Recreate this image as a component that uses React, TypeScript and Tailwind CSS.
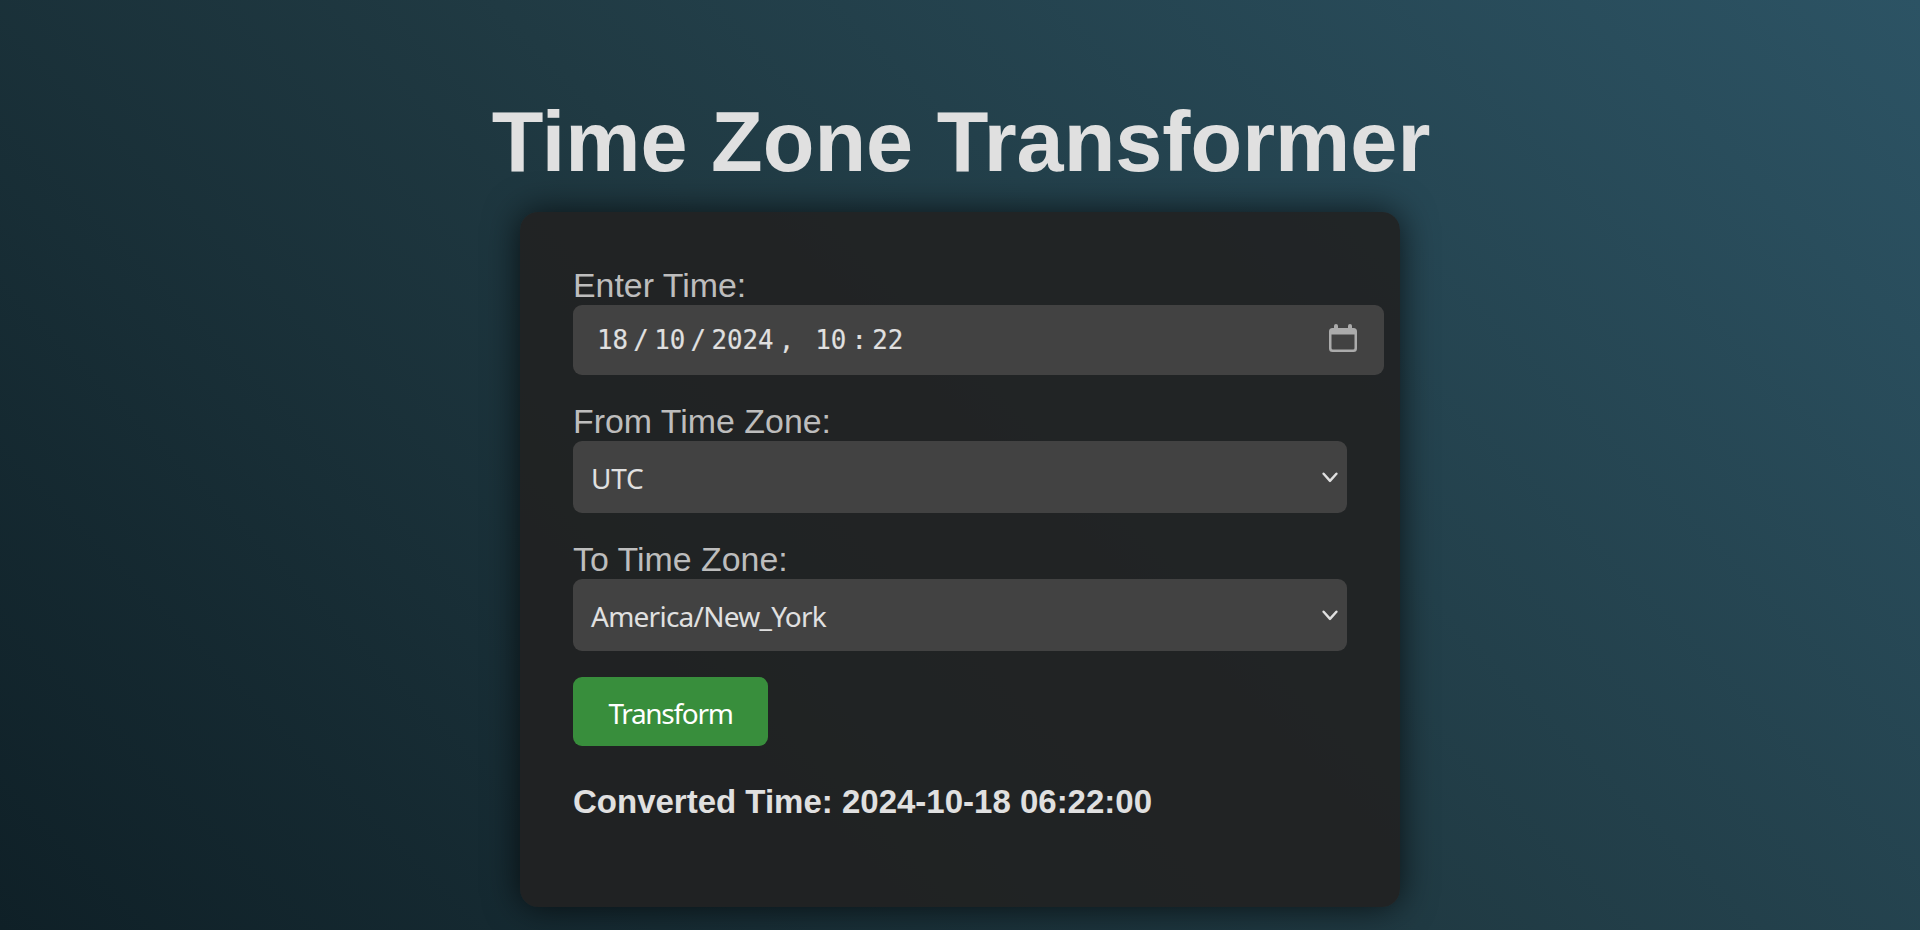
import { useState } from "react";

const field = "block bg-[#424242] text-[#e0e0e0] rounded-[9px]";
const sans = "font-['Noto_Sans','DejaVu_Sans',sans-serif]";

function Sep({ children }: { children: string }) {
  return <span className="px-[5.3px] whitespace-pre">{children}</span>;
}

function ZoneSelect({ value, tracking }: { value: string; tracking: string }) {
  return (
    <div className={`${field} ${sans} flex h-[72px] w-[774px] items-center justify-between pl-[18px] pr-[9px] text-[28px]`}>
      <span className={`pt-[2px] ${tracking}`}>{value}</span>
      <svg className="mt-[1px]" width="16" height="11" viewBox="0 0 16 11" fill="none" stroke="#e0e0e0" strokeWidth="2.4" strokeLinecap="round" strokeLinejoin="round">
        <path d="M1.600 1.700 8 8.900 14.400 1.700" />
      </svg>
    </div>
  );
}

export default function App() {
  const [result] = useState("2024-10-18 06:22:00");
  return (
    <div className="flex h-[930px] w-full flex-col items-center overflow-hidden bg-[linear-gradient(45deg,#0f2027,#203a43,#2c5364)] pt-[90px] font-['Liberation_Sans',sans-serif]">
      <h1 className="h-[122px] whitespace-nowrap pl-[2px] text-[84.6px] leading-[104px] font-bold text-[#e0e0e0]">Time Zone Transformer</h1>
      <main className="h-[695px] w-[880px] shrink-0 rounded-[18px] bg-[rgba(33,33,33,0.9)] pl-[53px] pt-[53px] shadow-[0_0_35px_rgba(0,0,0,0.7)]">
        <label className="block h-[40px] text-[33.9px] leading-[40px] text-[#bdbdbd]">Enter Time:</label>
        <div className={`${field} flex h-[70px] w-[811px] items-center justify-between pl-[24px] pr-[27px]`}>
          <div className="flex font-['DejaVu_Sans_Mono',monospace] text-[25.8px] [-webkit-text-stroke:0.15px_#e0e0e0]">
            <span>18</span><Sep>/</Sep><span>10</span><Sep>/</Sep><span>2024</span><Sep>{", "}</Sep><span>10</span><Sep>:</Sep><span>22</span>
          </div>
          <svg className="relative -top-[2px]" width="28" height="28" viewBox="0 0 28 28">
            <path fill="#ababab" fillRule="evenodd" d="M5 2a2 2 0 0 1 4 0v2h10V2a2 2 0 0 1 4 0v2h1.500a3.500 3.500 0 0 1 3.500 3.500v17a3.500 3.500 0 0 1-3.500 3.500h-21A3.500 3.500 0 0 1 0 24.500v-17A3.500 3.500 0 0 1 3.500 4H5ZM2.500 10.500V24a1.500 1.500 0 0 0 1.500 1.500h20a1.500 1.500 0 0 0 1.500-1.500V10.500Z" />
          </svg>
        </div>
        <label className="mt-[26px] block h-[40px] text-[33.9px] leading-[40px] text-[#bdbdbd]">From Time Zone:</label>
        <ZoneSelect value="UTC" tracking="tracking-[-0.2px]" />
        <label className="mt-[26px] block h-[40px] text-[33.9px] leading-[40px] text-[#bdbdbd]">To Time Zone:</label>
        <ZoneSelect value="America/New_York" tracking="tracking-[-0.75px]" />
        <button className={`${sans} mt-[26px] flex h-[69px] w-[195px] items-center justify-center rounded-[9px] bg-[#388e3c] pt-[2px] text-[28px] tracking-[-1.3px] text-white`}>
          Transform
        </button>
        <p className="mt-[36px] text-[33px] leading-[40px] font-bold text-[#e0e0e0]">Converted Time: {result}</p>
      </main>
    </div>
  );
}
